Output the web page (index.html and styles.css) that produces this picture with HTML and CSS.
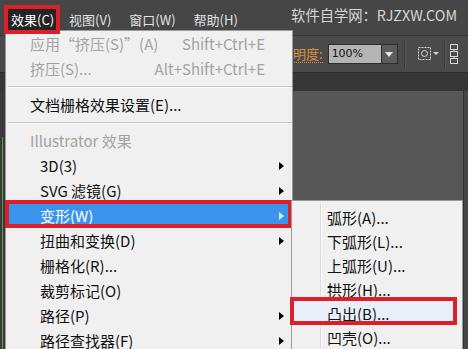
FILE: index.html
```html
<!DOCTYPE html>
<html lang="zh-CN">
<head>
    <meta charset="UTF-8">
    <title>效果菜单</title>
    <link rel="stylesheet" href="styles.css">
</head>
<body>
    <div class="app">
        <div class="menubar">
            <div class="menubar-item active">效果(C)</div>
            <div class="menubar-item">视图(V)</div>
            <div class="menubar-item">窗口(W)</div>
            <div class="menubar-item">帮助(H)</div>
            <div class="watermark">软件自学网：RJZXW.COM</div>
        </div>

        <div class="toolbar">
            <span class="opacity-label">不透明度:</span>
            <div class="field">100%</div>
            <div class="field-btn"><span class="down"></span></div>
            <div class="tool-sep"></div>
            <svg class="tool-icon" width="24" height="16" viewBox="0 0 24 16">
                <rect x="1.5" y="1.5" width="12" height="12" fill="none" stroke="#d6d6d6" stroke-dasharray="2 1"/>
                <circle cx="7.5" cy="7.5" r="3" fill="none" stroke="#d6d6d6"/>
                <path d="M16 6 L22 6 L19 9 Z" fill="#d6d6d6"/>
            </svg>
            <div class="tool-sep short"></div>
            <svg class="tool-icon" width="9" height="21" viewBox="0 0 9 21">
                <rect x="0.5" y="0.5" width="7" height="5" fill="none" stroke="#d6d6d6"/>
                <rect x="0.5" y="7.5" width="7" height="5" fill="none" stroke="#d6d6d6"/>
                <rect x="0.5" y="14.5" width="7" height="5" fill="none" stroke="#d6d6d6"/>
                <path d="M4 5.5 V7.5 M4 12.5 V14.5" stroke="#d6d6d6"/>
            </svg>
        </div>

        <div class="band"></div>

        <div class="workspace">
            <div class="dock-left"><span class="dock-line"></span></div>
            <div class="canvas"></div>
            <div class="dock-right"></div>
        </div>

        <!-- 效果 下拉菜单 -->
        <div class="dropdown">
            <div class="item disabled">应用“挤压(S)”(A)<span class="shortcut">Shift+Ctrl+E</span></div>
            <div class="item disabled">挤压(S)...<span class="shortcut">Alt+Shift+Ctrl+E</span></div>
            <div class="sep"></div>
            <div class="item">文档栅格效果设置(E)...</div>
            <div class="sep"></div>
            <div class="item header disabled">Illustrator 效果</div>
            <div class="item sub">3D(3)<span class="arrow"></span></div>
            <div class="item sub">SVG 滤镜(G)<span class="arrow"></span></div>
            <div class="item sub selected">变形(W)<span class="arrow"></span></div>
            <div class="item sub">扭曲和变换(D)<span class="arrow"></span></div>
            <div class="item sub">栅格化(R)...</div>
            <div class="item sub">裁剪标记(O)</div>
            <div class="item sub">路径(P)<span class="arrow"></span></div>
            <div class="item sub">路径查找器(F)<span class="arrow"></span></div>
        </div>

        <!-- 变形 子菜单 -->
        <div class="submenu">
            <div class="sub-item">弧形(A)...</div>
            <div class="sub-item">下弧形(L)...</div>
            <div class="sub-item">上弧形(U)...</div>
            <div class="sub-item">拱形(H)...</div>
            <div class="sub-item picked">凸出(B)...</div>
            <div class="sub-item">凹壳(O)...</div>
        </div>
    </div>
</body>
</html>
```

FILE: styles.css
```css
body {
    margin: 0;
    font-family: "Noto Sans CJK SC", "Microsoft YaHei", sans-serif;
    background-color: #575757;
}

.app {
    position: relative;
    width: 468px;
    height: 349px;
    overflow: hidden;
    display: flex;
    flex-direction: column;
}

/* 顶部菜单栏 */
.menubar {
    height: 35px;
    background-color: #464646;
    display: flex;
    align-items: flex-start;
    padding-left: 4px;
    box-sizing: border-box;
    color: #e2e2e2;
    font-size: 13px;
}

.menubar-item {
    padding: 0 9px;
    height: 21px;
    line-height: 21px;
    margin-top: 9px;
}

.menubar-item.active {
    position: relative;
    z-index: 2;
    margin-top: 5px;
    padding: 0 2px 0 3px;
    border: 4px solid #dd1f2a;
    background-color: #242424;
    color: #fff;
}

.watermark {
    margin-left: auto;
    margin-right: 11px;
    margin-top: 5px;
    line-height: 20px;
    font-size: 14.3px;
    color: #d6d6d6;
}

/* 控制栏 */
.toolbar {
    height: 36px;
    background-color: #4a4a4a;
    border-top: 1px solid #383838;
    display: flex;
    align-items: center;
    padding-left: 267px;
}

.opacity-label {
    color: #d8913f;
    font-size: 13px;
    line-height: 16px;
    border-bottom: 1px dotted #d8913f;
    margin-right: 5px;
}

.field {
    width: 49px;
    height: 18px;
    line-height: 18px;
    padding-left: 3px;
    background-color: #b5b5b5;
    border: 1px solid #2e2e2e;
    font-family: "DejaVu Sans", sans-serif;
    font-size: 11px;
    color: #111;
}

.field-btn {
    width: 15px;
    height: 18px;
    background-color: #5c5c5c;
    border: 1px solid #2e2e2e;
    border-left: none;
    display: flex;
    align-items: center;
    justify-content: center;
}

.down {
    width: 0;
    height: 0;
    border-top: 5px solid #e6e6e6;
    border-left: 4px solid transparent;
    border-right: 4px solid transparent;
}

.tool-sep {
    width: 1px;
    height: 28px;
    background-color: #3a3a3a;
    border-right: 1px solid #575757;
    margin: 0 11px 0 6px;
}

.tool-sep.short {
    margin: 0 4px 0 3px;
}

.tool-icon {
    display: block;
}

.band {
    height: 18px;
    background-color: #363636;
    border-top: 1px solid #2c2c2c;
}

.workspace {
    flex: 1;
    display: flex;
}

.dock-left {
    width: 5px;
    background-color: #3a3a3a;
    display: flex;
    flex-direction: column;
}

.dock-line {
    width: 1px;
    margin: 46px 0 0 2px;
    flex: 1;
    background-color: #5f9a4f;
}

.canvas {
    flex: 1;
    background-color: #575757;
}

.dock-right {
    width: 4px;
    background-color: #464646;
    border-left: 1px solid #333;
}

/* 下拉菜单 */
.dropdown {
    position: absolute;
    left: 5px;
    top: 30px;
    width: 288px;
    height: 330px;
    box-sizing: border-box;
    background-color: #f0f0f0;
    border: 1px solid #9a9a9a;
    font-size: 15px;
    color: #111;
}

.item {
    position: relative;
    height: 25px;
    display: flex;
    align-items: center;
    padding: 0 8px 0 24px;
    line-height: 1;
    white-space: nowrap;
}

.item.sub {
    padding-left: 34px;
}

.item.disabled {
    color: #a3a3a3;
}

.shortcut {
    margin-left: auto;
    margin-right: 19px;
}

.arrow {
    margin-left: auto;
    width: 0;
    height: 0;
    border-left: 5px solid #000;
    border-top: 4px solid transparent;
    border-bottom: 4px solid transparent;
}

.item.selected {
    background-color: #3a93ec;
    color: #fff;
}

.item.selected .arrow {
    border-left-color: #d4e9ff;
}

.item.selected::after {
    content: "";
    position: absolute;
    top: -3px;
    bottom: 0;
    left: -1px;
    right: 0;
    border: 4px solid #dd1f2a;
}

.sep {
    height: 11px;
    display: flex;
    align-items: center;
    padding-left: 2px;
}

.sep::before {
    content: "";
    flex: 1;
    height: 1px;
    background-color: #c4c4c4;
    border-bottom: 1px solid #fbfbfb;
}

/* 子菜单 */
.submenu {
    position: absolute;
    left: 291px;
    top: 200px;
    width: 172px;
    height: 160px;
    box-sizing: border-box;
    padding-top: 4px;
    background-color: #f0f0f0;
    border: 1px solid #9a9a9a;
    font-size: 15px;
    color: #111;
}

.submenu::before {
    content: "";
    position: absolute;
    left: 28px;
    top: 2px;
    bottom: 0;
    width: 1px;
    background-color: #dadada;
    border-right: 1px solid #fcfcfc;
}

.sub-item {
    position: relative;
    height: 24px;
    display: flex;
    align-items: center;
    padding-left: 35px;
    line-height: 1;
    white-space: nowrap;
}

.sub-item.picked {
    background-color: #e8eff8;
}

.sub-item.picked::after {
    content: "";
    position: absolute;
    top: -4px;
    bottom: 0;
    left: -2px;
    right: 5px;
    border: 4px solid #dd1f2a;
}
```
